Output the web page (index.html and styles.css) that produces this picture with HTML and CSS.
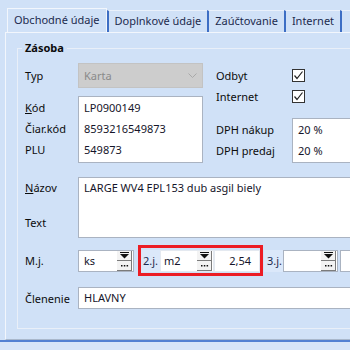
FILE: index.html
```html
<!doctype html>
<html lang="sk">
  <head>
    <meta charset="UTF-8" />
    <title>Zásoba - Obchodné údaje</title>
    <link rel="stylesheet" href="styles.css">
  </head>
  <body>
    <div class="tabs">
      <div class="tab active">Obchodné údaje</div>
      <div class="tab">Doplnkové údaje</div>
      <div class="tab">Zaúčtovanie</div>
      <div class="tab">Internet</div>
      <div class="tab last"></div>
    </div>

    <div class="page">
      <fieldset class="group">
        <legend>Zásoba</legend>

        <div class="top">
          <div class="left">
            <div class="row">
              <span class="lbl">Typ</span>
              <div class="combo">
                <span>Karta</span>
                <svg width="9" height="6" viewBox="0 0 9 6"><polyline points="0.5,0.5 4.5,4.5 8.5,0.5" fill="none" stroke="#a9a9a9" stroke-width="1" /></svg>
              </div>
            </div>
            <div class="row codes">
              <div class="lines">
                <span><u>K</u>ód</span>
                <span>Čiar.kód</span>
                <span>PLU</span>
              </div>
              <div class="box code-box lines">
                <span>LP0900149</span>
                <span>8593216549873</span>
                <span>549873</span>
              </div>
            </div>
          </div>

          <div class="right">
            <div class="check-row">
              <span class="rlbl">Odbyt</span>
              <span class="cb"><svg width="11" height="11" viewBox="0 0 11 11"><polyline points="1.5,5.5 4,8.5 9.5,1.5" fill="none" stroke="#222" stroke-width="1.2" /></svg></span>
            </div>
            <div class="check-row">
              <span class="rlbl">Internet</span>
              <span class="cb"><svg width="11" height="11" viewBox="0 0 11 11"><polyline points="1.5,5.5 4,8.5 9.5,1.5" fill="none" stroke="#222" stroke-width="1.2" /></svg></span>
            </div>
            <div class="row dph">
              <div class="lines rlbl">
                <span>DPH nákup</span>
                <span>DPH predaj</span>
              </div>
              <div class="box dph-box lines">
                <span>20 %</span>
                <span>20 %</span>
              </div>
            </div>
          </div>
        </div>

        <div class="row nazov">
          <div class="lbl nazov-lbls">
            <span><u>N</u>ázov</span>
            <span>Text</span>
          </div>
          <div class="box nazov-box">LARGE WV4 EPL153 dub asgil biely</div>
        </div>

        <div class="row mj">
          <span class="lbl">M.j.</span>
          <div class="fld ks">
            <span class="val">ks</span>
            <span class="spin"><span class="drop"><svg width="11" height="7" viewBox="0 0 11 7"><rect x="1" y="0" width="9" height="1" fill="#111" /><polygon points="1,2 10,2 5.5,6.5" fill="#111" /></svg></span><span class="more"><svg width="9" height="3" viewBox="0 0 9 3"><rect x="1" y="1" width="1.5" height="1.5" fill="#111" /><rect x="3.8" y="1" width="1.5" height="1.5" fill="#111" /><rect x="6.6" y="1" width="1.5" height="1.5" fill="#111" /></svg></span></span>
          </div>

          <div class="red">
            <span class="unit">2.j.</span>
            <div class="fld inner m2">
              <span class="val">m2</span>
              <span class="spin"><span class="drop"><svg width="11" height="7" viewBox="0 0 11 7"><rect x="1" y="0" width="9" height="1" fill="#111" /><polygon points="1,2 10,2 5.5,6.5" fill="#111" /></svg></span><span class="more"><svg width="9" height="3" viewBox="0 0 9 3"><rect x="1" y="1" width="1.5" height="1.5" fill="#111" /><rect x="3.8" y="1" width="1.5" height="1.5" fill="#111" /><rect x="6.6" y="1" width="1.5" height="1.5" fill="#111" /></svg></span></span>
            </div>
            <div class="fld inner amount">2,54</div>
          </div>

          <span class="unit third">3.j.</span>
          <div class="fld j3">
            <span class="val"></span>
            <span class="spin"><span class="drop"><svg width="11" height="7" viewBox="0 0 11 7"><rect x="1" y="0" width="9" height="1" fill="#111" /><polygon points="1,2 10,2 5.5,6.5" fill="#111" /></svg></span><span class="more"><svg width="9" height="3" viewBox="0 0 9 3"><rect x="1" y="1" width="1.5" height="1.5" fill="#111" /><rect x="3.8" y="1" width="1.5" height="1.5" fill="#111" /><rect x="6.6" y="1" width="1.5" height="1.5" fill="#111" /></svg></span></span>
          </div>
          <div class="fld rest"></div>
        </div>

        <div class="row clen">
          <span class="lbl">Členenie</span>
          <div class="box clen-box">HLAVNY</div>
        </div>
      </fieldset>
    </div>

    <div class="status"></div>
  </body>
</html>
```

FILE: styles.css
```css
* {
  margin: 0;
  padding: 0;
  box-sizing: border-box;
}

body {
  width: 350px;
  height: 350px;
  overflow: hidden;
  background: #d0e1f7;
  font-family: 'Noto Sans', 'Open Sans', sans-serif;
  font-size: 11px;
  color: #0c0c0c;
}

/* Tab strip */
.tabs {
  display: flex;
  align-items: flex-end;
  height: 32px;
  padding-left: 7px;
  overflow: hidden;
}

.tab {
  height: 22px;
  line-height: 20px;
  padding: 0 6px;
  border-left: 2px solid #3d6ec4;
  border-top: 1px solid #eaf1fb;
  color: #1c2a4d;
  white-space: nowrap;
}

.tab.active {
  position: relative;
  z-index: 1;
  height: 25px;
  line-height: 22px;
  margin-bottom: -1px;
  padding: 0 6px;
  border: 1px solid #f2f6fc;
  border-bottom: none;
  background: #d0e1f7;
}

.tab.last {
  flex: 1;
}

/* Tab page */
.page {
  height: 308px;
  margin-left: 5px;
  padding: 7px 0 0 11px;
  border-top: 1px solid #f2f6fc;
  border-left: 1px solid #f2f6fc;
  border-bottom: 1px solid #a9b8cc;
}

.status {
  height: 10px;
  border-top: 2px solid #5281d2;
  background: #d6e5f8;
}

.group {
  min-width: 0;
  border: 1px solid #e9eff8;
  border-right: none;
  padding: 7px 0 19px 7px;
}

.group legend {
  margin-left: -3px;
  padding: 0 3px;
  line-height: 16px;
  font-weight: bold;
  color: #0c0c0c;
}

/* Rows */
.row {
  display: flex;
}

.lbl {
  width: 53px;
  flex-shrink: 0;
}

.rlbl {
  width: 76px;
  flex-shrink: 0;
}

.top {
  display: flex;
  gap: 13px;
}

.left {
  width: 178px;
  flex-shrink: 0;
}

.left > .row:first-child {
  align-items: center;
}

.right {
  flex: 1;
  padding-top: 2px;
}

.lines {
  display: flex;
  flex-direction: column;
  line-height: 21px;
  padding-top: 1px;
}

.codes .lines:first-child {
  width: 53px;
}

.box {
  background: #fff;
  border: 1px solid #aab3c1;
  border-right: none;
  padding-left: 5px;
  color: #15152a;
}

.combo {
  display: flex;
  align-items: center;
  justify-content: space-between;
  width: 125px;
  height: 25px;
  padding: 0 5px;
  background: #cdcdcd;
  border: 1px solid #c3c3c3;
  color: #8a8a8a;
}

.codes {
  margin-top: 8px;
}

.code-box {
  width: 125px;
  height: 67px;
  padding-top: 0;
  border-right: 1px solid #aab3c1;
}

.check-row {
  display: flex;
  align-items: center;
  height: 21px;
}

.cb {
  display: flex;
  align-items: center;
  justify-content: center;
  width: 13px;
  height: 13px;
  background: #fff;
  border: 1px solid #333;
}

.dph {
  margin-top: 11px;
}

.dph-box {
  flex: 1;
  height: 45px;
  padding-top: 0;
}

.nazov {
  margin-top: 14px;
}

.nazov-lbls {
  display: flex;
  flex-direction: column;
  justify-content: space-between;
  height: 61px;
  padding: 1px 0 6px;
  line-height: 19px;
}

.nazov-box {
  flex: 1;
  height: 61px;
  line-height: 19px;
}

/* Units row */
.mj {
  margin-top: 7px;
  align-items: center;
}

.fld {
  display: flex;
  align-items: center;
  flex-shrink: 0;
  height: 22px;
  padding-left: 5px;
  background: #fff;
  border: 1px solid #aab3c1;
  color: #15152a;
}

.fld .val {
  flex: 1;
}

.spin {
  display: flex;
  flex-direction: column;
  width: 15px;
  height: 20px;
  margin-right: 1px;
}

.spin > span {
  display: flex;
  align-items: center;
  justify-content: center;
  height: 10px;
  background: #f3f3f3;
  border-right: 1px solid #7b7b7b;
  border-bottom: 1px solid #7b7b7b;
}

.ks {
  width: 56px;
}

.red {
  display: flex;
  align-items: center;
  flex-shrink: 0;
  height: 31px;
  margin-left: 4px;
  border: 3px solid #ec1c24;
}

.unit {
  flex-shrink: 0;
  width: 19px;
  height: 22px;
  line-height: 22px;
  padding-left: 2px;
  background: #dbe8fa;
  color: #1c2a4d;
}

.inner {
  border-color: #e4e9f0;
}

.m2 {
  width: 54px;
  padding-left: 3px;
}

.amount {
  width: 46px;
  justify-content: flex-end;
  padding-right: 8px;
}

.unit.third {
  margin-left: 1px;
  padding-left: 3px;
}

.j3 {
  width: 55px;
}

.rest {
  flex: 1;
  flex-shrink: 1;
  min-width: 0;
  margin-left: 2px;
  border-right: none;
}

.clen {
  margin-top: 11px;
  align-items: center;
}

.clen-box {
  flex: 1;
  height: 22px;
  line-height: 20px;
}
```
